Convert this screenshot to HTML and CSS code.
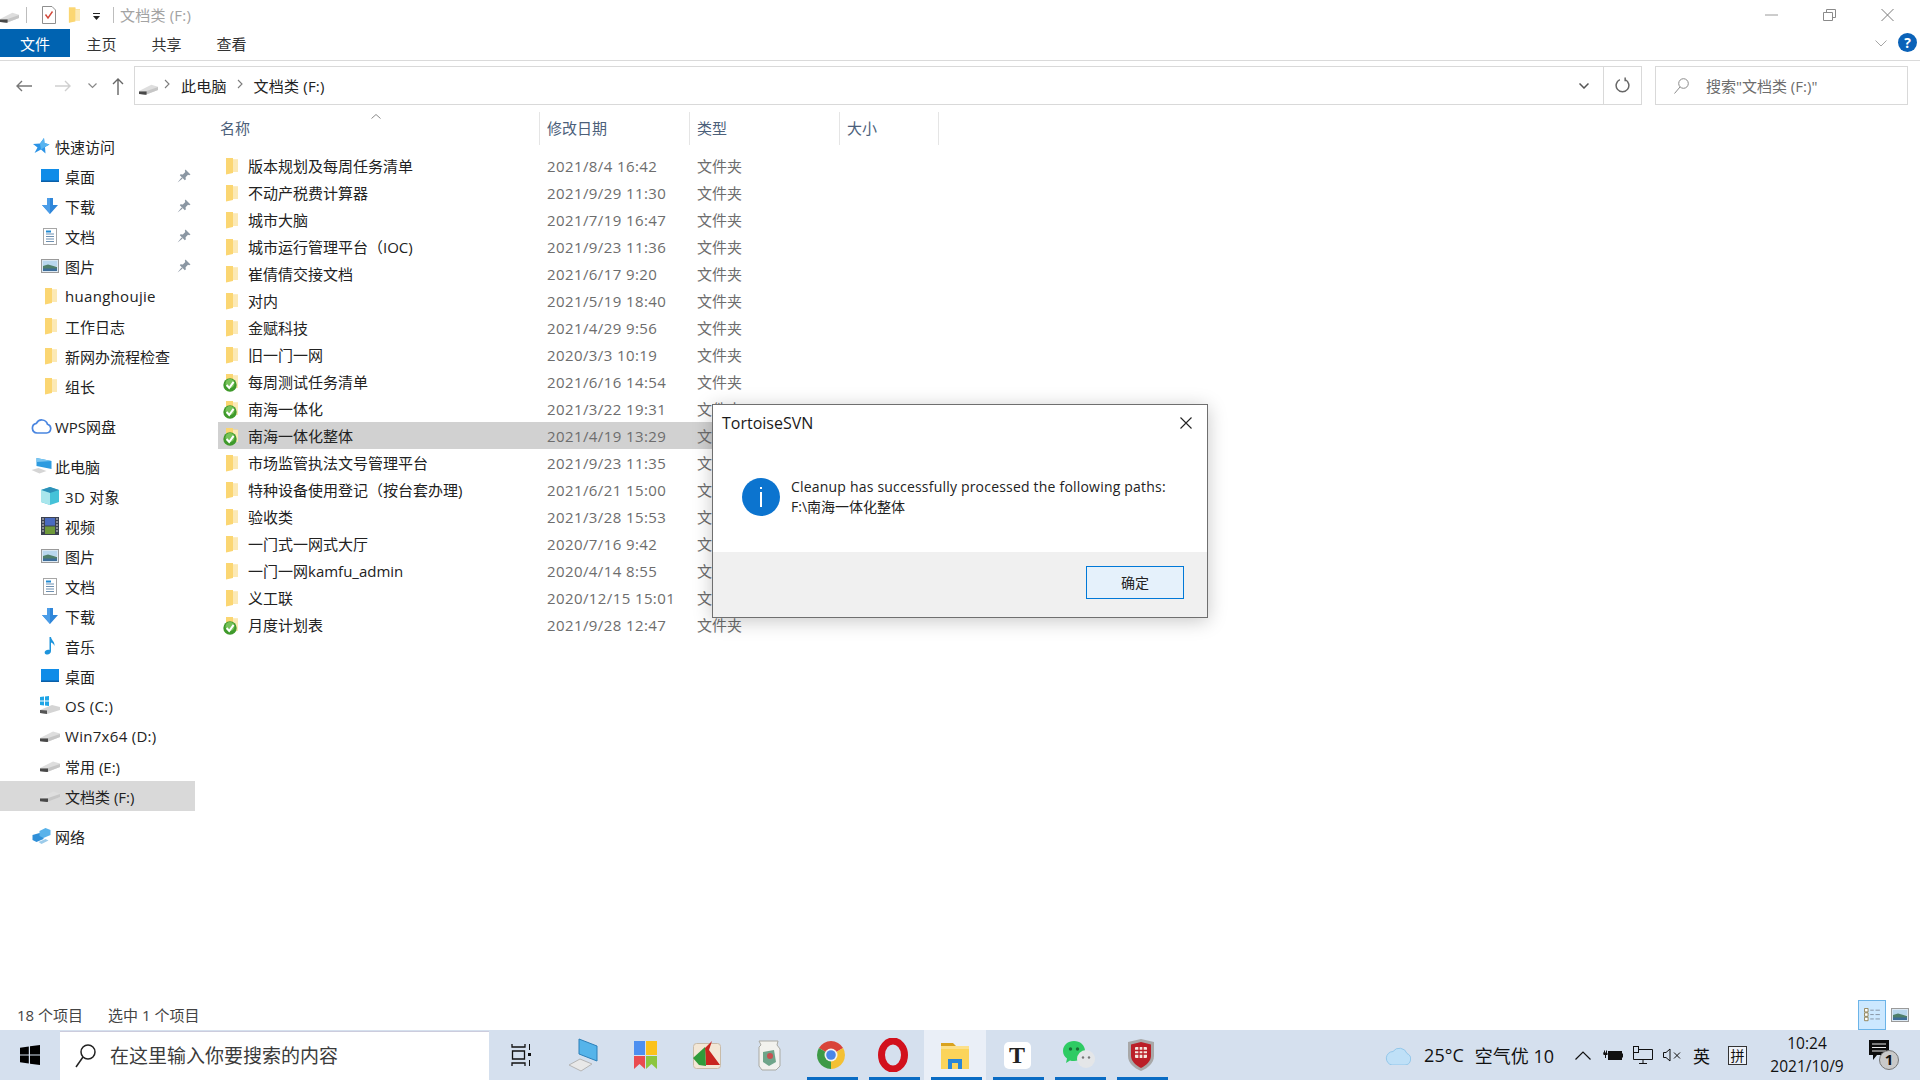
FILE: index.html
```html
<!DOCTYPE html>
<html lang="zh-CN">

<head>
  <meta charset="UTF-8" />
  <title>文档类 (F:)</title>
  <link rel="stylesheet" href="styles.css">
</head>

<body>
  <svg class="defs" width="0" height="0">
    <symbol id="drive" viewBox="0 0 20 14">
      <path d="M0 9 L13 2.500 L20 4.500 L20 8 L7 13 L0 12Z" fill="#dedede" />
      <path d="M0 9.500 L8 9 L20 5 L20 8 L7 13 L0 12Z" fill="#c6c6c6" />
      <path d="M0 9.500 L8 9.500 L8 12.700 L7 13 L0 12.300Z" fill="#484848" />
    </symbol>
    <symbol id="osdrive" viewBox="0 0 20 20">
      <path d="M0 14 L12 9 L20 11 L20 14 L7 18 L0 17Z" fill="#d4d4d4" />
      <path d="M0 14 L7 14.500 L7 18 L0 17Z" fill="#555" />
      <path d="M0 1 L4 .5 V4.500 H0Z M5 .4 L9 0 V4.500 H5Z M0 5.500 H4 V9.500 L0 9Z M5 5.500 H9 V10 L5 9.600Z" fill="#1fa5e6" />
    </symbol>
    <symbol id="folder" viewBox="0 0 13 18">
      <path d="M1 1 L8 1 L8 2.500 L13 2.500 L13 15 L8 15 L1 17Z" fill="#f9dc8a" />
      <path d="M1 1 L8 1 L8 16 L1 17.500Z" fill="#fbd672" />
      <path d="M8 3 L13 3 L13 15 L8 15Z" fill="#fce9b4" />
    </symbol>
    <symbol id="check" viewBox="0 0 14 14">
      <circle cx="7" cy="7" r="6.700" fill="#3f9a2c" />
      <circle cx="7" cy="5.500" r="4.500" fill="#76c25a" />
      <path d="M3.600 7 L6.200 10 L10.600 3.800" fill="none" stroke="#fff" stroke-width="2" />
    </symbol>
    <symbol id="pin" viewBox="0 0 14 14">
      <path d="M8.500 .5 L13.500 5.500 L12.200 6.300 L11 5.800 L8.600 8.200 L8.800 10.500 L7.800 11.300 L2.800 6.300 L3.600 5.300 L5.800 5.500 L8.300 3 L7.800 1.800Z M4.500 8.500 L5.600 9.600 L.6 13.500Z" fill="#8b97a3" />
    </symbol>
    <symbol id="star" viewBox="0 0 17 16">
      <path d="M11 0 L11.500 5 L16.500 6.500 L12 9 L12.500 15.500 L8 11.500 L1.500 15 L4.500 9.500 L0 6 L7 5.500Z" fill="#2b93e6" />
      <path d="M11 0 L11.500 5 L16.500 6.500 L12 9 L8 11.500 L7 5.500Z" fill="#58b4f0" />
    </symbol>
    <symbol id="desktop" viewBox="0 0 18 14">
      <rect width="18" height="13" fill="#0f8ce8" />
      <rect y="11.500" width="18" height="1.500" fill="#0a5fa8" />
    </symbol>
    <symbol id="download" viewBox="0 0 16 16">
      <path d="M5 0 H11 V7 H16 L8 16 L0 7 H5Z" fill="#2f86d9" />
      <path d="M5 0 H8 V16 L0 7 H5Z" fill="#4b9de8" />
    </symbol>
    <symbol id="doc" viewBox="0 0 14 17">
      <rect x=".5" y=".5" width="13" height="16" fill="#fff" stroke="#a6a6a6" />
      <path d="M3 3.500 H8 M3 6 H11 M3 8.500 H11 M3 11 H11 M3 13.500 H11" stroke="#6d8fb0" />
      <path d="M3 3.500 H8" stroke="#1f8ad2" stroke-width="2" />
    </symbol>
    <symbol id="picture" viewBox="0 0 18 14">
      <rect x=".5" y=".5" width="17" height="13" fill="#dbe8f3" stroke="#9a9a9a" />
      <rect x="2" y="2" width="14" height="5" fill="#b9d7ee" />
      <path d="M2 7 L7 5.500 L16 8 V12 H2Z" fill="#4f7f6a" />
      <rect x="2" y="9.500" width="14" height="2.500" fill="#3d6d9a" />
    </symbol>
    <symbol id="cloud" viewBox="0 0 21 16">
      <path d="M6 15 H15.500 A4.500 4.500 0 0 0 16.500 6.200 A6 6 0 0 0 5.400 5.300 A4.900 4.900 0 0 0 6 15Z" fill="none" stroke="#4a86e0" stroke-width="1.700" />
    </symbol>
    <symbol id="pc" viewBox="0 0 20 16">
      <path d="M5 0 L20 3 V11 L5 8Z" fill="#2d9be0" />
      <path d="M5 0 L20 3 L5 4Z" fill="#7cc6f1" />
      <path d="M0 12 L7 10 L15 13 L8 15.500Z" fill="#d5d5d5" />
    </symbol>
    <symbol id="cube" viewBox="0 0 18 18">
      <path d="M9 0 L18 3 V15 L9 18 L0 15 V3Z" fill="#45c2d8" />
      <path d="M9 0 L18 3 L9 6 L0 3Z" fill="#2e90b8" />
      <path d="M0 3 L9 6 V18 L0 15Z" fill="#a9e6ec" />
    </symbol>
    <symbol id="video" viewBox="0 0 18 18">
      <rect width="18" height="18" fill="#3c4250" />
      <rect x="4" y="1" width="10" height="7.500" fill="#4a6bc0" />
      <rect x="4" y="9.500" width="10" height="7.500" fill="#6f9a3a" />
      <path d="M1 2 H3 M1 5 H3 M1 8 H3 M1 11 H3 M1 14 H3 M15 2 H17 M15 5 H17 M15 8 H17 M15 11 H17 M15 14 H17" stroke="#d9d9d9" />
    </symbol>
    <symbol id="music" viewBox="0 0 12 18">
      <path d="M5.500 0 H7 C7.500 3.500 11 4.500 10.500 9 C9.800 7 8.500 6 7 5.500 V14 C7 16.500 4.700 18 2.500 17.500 C.5 17 0 15 1.500 13.700 C3 12.500 4.500 12.500 5.500 13Z" fill="#1e94dc" />
    </symbol>
    <symbol id="network" viewBox="0 0 18 16">
      <path d="M0 7 L7 5 L11 7 V11 L4 14 L0 12Z" fill="#2f8fd8" />
      <path d="M7 3 L13 0 L18 2 V7 L11 10 L7 8Z" fill="#59b2ea" />
      <path d="M6 14 L13 11 L16 12.500 L9 16Z" fill="#9ccbea" />
    </symbol>
    <symbol id="chev" viewBox="0 0 6 10">
      <path d="M1 1 L5 5 L1 9" fill="none" stroke="#7c7c7c" stroke-width="1.100" />
    </symbol>
  </svg>

  <div class="screen">
    <header class="titlebar">
      <svg class="qa-drive"><use href="#drive" /></svg>
      <span class="qa-sep"></span>
      <svg class="qa-check" viewBox="0 0 14 18">
        <path d="M.5 .5 H10 L13.500 4 V17.500 H.5Z" fill="#fff" stroke="#8f8f8f" />
        <path d="M3.500 8.500 L6 12 L10.500 5.500" fill="none" stroke="#d2483a" stroke-width="1.400" />
      </svg>
      <svg class="qa-folder"><use href="#folder" /></svg>
      <svg class="qa-drop" viewBox="0 0 7 7">
        <path d="M0 0 H7 V1 H0Z M0 3 H7 L3.500 7Z" fill="#222" />
      </svg>
      <span class="qa-sep qa-sep-2"></span>
      <span class="title-text">文档类 (F:)</span>
      <div class="win-controls">
        <svg viewBox="0 0 13 12"><path d="M0 6 H13" stroke="#9a9a9a" /></svg>
        <svg viewBox="0 0 13 12"><path d="M.5 3.500 H9.500 V11.500 H.5Z M3.500 3.500 V.5 H12.500 V8.500 H9.500" fill="none" stroke="#8a8a8a" /></svg>
        <svg viewBox="0 0 13 12"><path d="M.5 0 L12.500 12 M12.500 0 L.5 12" stroke="#7a7a7a" /></svg>
      </div>
    </header>

    <nav class="ribbon">
      <span class="tab tab-file">文件</span>
      <span class="tab">主页</span>
      <span class="tab">共享</span>
      <span class="tab">查看</span>
      <svg class="ribbon-chev" viewBox="0 0 12 7"><path d="M.5 .5 L6 6 L11.500 .5" fill="none" stroke="#a6a6a6" /></svg>
      <span class="help">?</span>
    </nav>

    <div class="addressbar">
      <div class="nav-buttons">
        <svg class="nb-back" viewBox="0 0 16 12"><path d="M6 1 L1 6 L6 11 M1 6 H16" fill="none" stroke="#777" stroke-width="1.400" /></svg>
        <svg class="nb-forward" viewBox="0 0 16 12"><path d="M10 1 L15 6 L10 11 M15 6 H0" fill="none" stroke="#cfcfcf" stroke-width="1.400" /></svg>
        <svg class="nb-recent" viewBox="0 0 9 6"><path d="M.5 .5 L4.500 4.500 L8.500 .5" fill="none" stroke="#888" stroke-width="1.200" /></svg>
        <svg class="nb-up" viewBox="0 0 12 17"><path d="M1 6 L6 1 L11 6 M6 1 V17" fill="none" stroke="#666" stroke-width="1.400" /></svg>
      </div>
      <div class="address">
        <svg class="addr-drive"><use href="#drive" /></svg>
        <svg class="addr-chev"><use href="#chev" /></svg>
        <span class="crumb">此电脑</span>
        <svg class="addr-chev"><use href="#chev" /></svg>
        <span class="crumb">文档类 (F:)</span>
        <svg class="addr-down" viewBox="0 0 10 6"><path d="M.5 .5 L5 5 L9.500 .5" fill="none" stroke="#555" stroke-width="1.500" /></svg>
        <span class="refresh">
          <svg viewBox="0 0 14 16"><path d="M4.500 2.500 A6 6 0 1 0 9.500 2.500 M9.500 .5 V4" fill="none" stroke="#666" stroke-width="1.400" /></svg>
        </span>
      </div>
      <div class="search">
        <svg viewBox="0 0 15 16"><circle cx="9.500" cy="5.500" r="4.800" fill="none" stroke="#8a8a8a" /><path d="M6 9 L.5 15.500" stroke="#8a8a8a" /></svg>
        <span>搜索"文档类 (F:)"</span>
      </div>
    </div>

    <div class="explorer">
      <aside class="navpane">
        <div class="nav-group">
          <div class="nav-row nav-head"><svg class="ic-star"><use href="#star" /></svg>快速访问</div>
          <div class="nav-row"><svg class="ic-wide"><use href="#desktop" /></svg>桌面<svg class="pin"><use href="#pin" /></svg></div>
          <div class="nav-row"><svg class="ic-dl"><use href="#download" /></svg>下载<svg class="pin"><use href="#pin" /></svg></div>
          <div class="nav-row"><svg class="ic-doc"><use href="#doc" /></svg>文档<svg class="pin"><use href="#pin" /></svg></div>
          <div class="nav-row"><svg class="ic-wide"><use href="#picture" /></svg>图片<svg class="pin"><use href="#pin" /></svg></div>
          <div class="nav-row latin"><svg class="ic-folder"><use href="#folder" /></svg>huanghoujie</div>
          <div class="nav-row"><svg class="ic-folder"><use href="#folder" /></svg>工作日志</div>
          <div class="nav-row"><svg class="ic-folder"><use href="#folder" /></svg>新网办流程检查</div>
          <div class="nav-row"><svg class="ic-folder"><use href="#folder" /></svg>组长</div>
        </div>
        <div class="nav-group">
          <div class="nav-row nav-head"><svg class="ic-cloud"><use href="#cloud" /></svg>WPS网盘</div>
        </div>
        <div class="nav-group">
          <div class="nav-row nav-head"><svg class="ic-cloud"><use href="#pc" /></svg>此电脑</div>
          <div class="nav-row latin"><svg class="ic-sq"><use href="#cube" /></svg>3D 对象</div>
          <div class="nav-row"><svg class="ic-sq"><use href="#video" /></svg>视频</div>
          <div class="nav-row"><svg class="ic-wide"><use href="#picture" /></svg>图片</div>
          <div class="nav-row"><svg class="ic-doc"><use href="#doc" /></svg>文档</div>
          <div class="nav-row"><svg class="ic-dl"><use href="#download" /></svg>下载</div>
          <div class="nav-row"><svg class="ic-music"><use href="#music" /></svg>音乐</div>
          <div class="nav-row"><svg class="ic-wide"><use href="#desktop" /></svg>桌面</div>
          <div class="nav-row latin"><svg class="ic-os"><use href="#osdrive" /></svg>OS (C:)</div>
          <div class="nav-row latin"><svg class="ic-drive"><use href="#drive" /></svg>Win7x64 (D:)</div>
          <div class="nav-row"><svg class="ic-drive"><use href="#drive" /></svg>常用 (E:)</div>
          <div class="nav-row selected"><svg class="ic-drive"><use href="#drive" /></svg>文档类 (F:)</div>
        </div>
        <div class="nav-group">
          <div class="nav-row nav-head"><svg class="ic-cloud"><use href="#network" /></svg>网络</div>
        </div>
      </aside>

      <main class="files">
        <div class="file-header">
          <span class="col-h col-name">名称
            <svg class="sort" viewBox="0 0 10 5"><path d="M.5 4.500 L5 .5 L9.500 4.500" fill="none" stroke="#8a8a8a" /></svg>
          </span>
          <span class="col-h">修改日期</span>
          <span class="col-h">类型</span>
          <span class="col-h">大小</span>
        </div>
        <div class="file-list">
          <div class="file-row"><span class="name"><svg class="f-ic"><use href="#folder" /></svg>版本规划及每周任务清单</span><span class="date">2021/8/4 16:42</span><span class="type">文件夹</span></div>
          <div class="file-row"><span class="name"><svg class="f-ic"><use href="#folder" /></svg>不动产税费计算器</span><span class="date">2021/9/29 11:30</span><span class="type">文件夹</span></div>
          <div class="file-row"><span class="name"><svg class="f-ic"><use href="#folder" /></svg>城市大脑</span><span class="date">2021/7/19 16:47</span><span class="type">文件夹</span></div>
          <div class="file-row"><span class="name"><svg class="f-ic"><use href="#folder" /></svg>城市运行管理平台（IOC)</span><span class="date">2021/9/23 11:36</span><span class="type">文件夹</span></div>
          <div class="file-row"><span class="name"><svg class="f-ic"><use href="#folder" /></svg>崔倩倩交接文档</span><span class="date">2021/6/17 9:20</span><span class="type">文件夹</span></div>
          <div class="file-row"><span class="name"><svg class="f-ic"><use href="#folder" /></svg>对内</span><span class="date">2021/5/19 18:40</span><span class="type">文件夹</span></div>
          <div class="file-row"><span class="name"><svg class="f-ic"><use href="#folder" /></svg>金赋科技</span><span class="date">2021/4/29 9:56</span><span class="type">文件夹</span></div>
          <div class="file-row"><span class="name"><svg class="f-ic"><use href="#folder" /></svg>旧一门一网</span><span class="date">2020/3/3 10:19</span><span class="type">文件夹</span></div>
          <div class="file-row"><span class="name"><svg class="f-ic"><use href="#folder" /></svg><svg class="ok"><use href="#check" /></svg>每周测试任务清单</span><span class="date">2021/6/16 14:54</span><span class="type">文件夹</span></div>
          <div class="file-row"><span class="name"><svg class="f-ic"><use href="#folder" /></svg><svg class="ok"><use href="#check" /></svg>南海一体化</span><span class="date">2021/3/22 19:31</span><span class="type">文件夹</span></div>
          <div class="file-row selected"><span class="name"><svg class="f-ic"><use href="#folder" /></svg><svg class="ok"><use href="#check" /></svg>南海一体化整体</span><span class="date">2021/4/19 13:29</span><span class="type">文件夹</span></div>
          <div class="file-row"><span class="name"><svg class="f-ic"><use href="#folder" /></svg>市场监管执法文号管理平台</span><span class="date">2021/9/23 11:35</span><span class="type">文件夹</span></div>
          <div class="file-row"><span class="name"><svg class="f-ic"><use href="#folder" /></svg>特种设备使用登记（按台套办理)</span><span class="date">2021/6/21 15:00</span><span class="type">文件夹</span></div>
          <div class="file-row"><span class="name"><svg class="f-ic"><use href="#folder" /></svg>验收类</span><span class="date">2021/3/28 15:53</span><span class="type">文件夹</span></div>
          <div class="file-row"><span class="name"><svg class="f-ic"><use href="#folder" /></svg>一门式一网式大厅</span><span class="date">2020/7/16 9:42</span><span class="type">文件夹</span></div>
          <div class="file-row"><span class="name"><svg class="f-ic"><use href="#folder" /></svg>一门一网kamfu_admin</span><span class="date">2020/4/14 8:55</span><span class="type">文件夹</span></div>
          <div class="file-row"><span class="name"><svg class="f-ic"><use href="#folder" /></svg>义工联</span><span class="date">2020/12/15 15:01</span><span class="type">文件夹</span></div>
          <div class="file-row"><span class="name"><svg class="f-ic"><use href="#folder" /></svg><svg class="ok"><use href="#check" /></svg>月度计划表</span><span class="date">2021/9/28 12:47</span><span class="type">文件夹</span></div>
        </div>
      </main>
    </div>

    <footer class="statusbar">
      <span class="count">18 个项目</span>
      <span class="picked">选中 1 个项目</span>
      <span class="view-btn active">
        <svg viewBox="0 0 18 16"><path d="M.5 .5 H4.500 V4.500 H.5Z M.5 5.500 H4.500 V9.500 H.5Z M.5 10.500 H4.500 V14.500 H.5Z" fill="#fff" stroke="#8a7a4a" /><path d="M7 2.500 H11 M13 2.500 H18 M7 7.500 H11 M13 7.500 H18 M7 12.500 H11 M13 12.500 H18" stroke="#7f8a99" /></svg>
      </span>
      <span class="view-btn">
        <svg viewBox="0 0 18 14"><use href="#picture" /></svg>
      </span>
    </footer>

    <div class="taskbar">
      <span class="start">
        <svg viewBox="0 0 20 20"><path d="M0 2.800 L8.800 1.500 V9.500 H0Z M10 1.300 L20 0 V9.500 H10Z M0 10.500 H8.800 V18.500 L0 17.200Z M10 10.500 H20 V20 L10 18.700Z" fill="#000" /></svg>
      </span>
      <div class="taskbar-search">
        <svg viewBox="0 0 21 24"><circle cx="13" cy="8" r="7" fill="none" stroke="#222" stroke-width="1.500" /><path d="M8 13 L1 23" stroke="#222" stroke-width="1.500" /></svg>
        <span>在这里输入你要搜索的内容</span>
      </div>
      <div class="task-buttons">
        <span class="task-btn">
          <svg class="tb-view" viewBox="0 0 20 24"><path d="M1 1 V4 H14 V1 M1 23 V20 H14 V23 M1.500 8 H13.500 V16 H1.500Z" fill="none" stroke="#111" stroke-width="1.300" /><path d="M18.500 1 V7 M18.500 17 V23" stroke="#111" /><rect x="17" y="10" width="3" height="3" fill="#111" /></svg>
        </span>
        <span class="task-btn">
          <svg class="tb-pc" viewBox="0 0 30 34"><path d="M11 1 L29 8 V23 L11 16Z" fill="#55b4ea" stroke="#2d7fb8" /><path d="M1 27 L12 21 L24 26 L13 33Z" fill="#e8e8e8" stroke="#b5b5b5" /></svg>
        </span>
        <span class="task-btn">
          <svg class="tb-mark" viewBox="0 0 23 28"><rect width="11" height="14" fill="#4d8ff0" /><rect x="12" width="11" height="14" fill="#fbc21b" /><path d="M0 15 H11 V28 L5.500 23 L0 28Z" fill="#ea4b50" /><path d="M12 15 H23 V28 L17.500 23 L12 28Z" fill="#8cc63f" /></svg>
        </span>
        <span class="task-btn">
          <svg class="tb-snip" viewBox="0 0 28 28"><rect x=".5" y="2.500" width="27" height="25" rx="3" fill="#f3e7d6" stroke="#c8bba8" /><path d="M12 7 L19 0 L16 9 L27 24 L13 24Z" fill="#c9251f" /><path d="M0 17 L12 6 L13 25 L6 24Z" fill="#2f9b3a" /></svg>
        </span>
        <span class="task-btn">
          <svg class="tb-jar" viewBox="0 0 24 32"><path d="M2 2 H21 L20 6 L23 10 V27 L19 31 H5 L2 27 V8 L4 6Z" fill="#f2f2ee" stroke="#a9a9a3" /><path d="M6 13 L17 11 L19 23 L12 27 L6 23Z" fill="#6fa58a" /><circle cx="13" cy="17" r="3" fill="#c85050" /></svg>
        </span>
        <span class="task-btn running">
          <svg class="tb-chrome" viewBox="0 0 28 28"><path d="M14 14 L1.900 7 A14 14 0 0 1 26.100 7Z" fill="#d9443a" /><path d="M14 14 L26.100 7 A14 14 0 0 1 14 28Z" fill="#f4c033" /><path d="M14 14 L14 28 A14 14 0 0 1 1.900 7Z" fill="#3d9a46" /><circle cx="14" cy="14" r="6.500" fill="#f3f3f3" /><circle cx="14" cy="14" r="4.800" fill="#4a85e8" /></svg>
        </span>
        <span class="task-btn running">
          <svg class="tb-opera" viewBox="0 0 30 34"><ellipse cx="15" cy="17" rx="11.500" ry="14" fill="none" stroke="#d2111d" stroke-width="7" /></svg>
        </span>
        <span class="task-btn running active">
          <svg class="tb-explorer" viewBox="0 0 28 28"><path d="M0 2 H12 L15 5 H0Z" fill="#d9a21e" /><rect y="5" width="28" height="23" fill="#fbd45a" /><path d="M0 5 H28 V8 H0Z" fill="#fce08a" /><path d="M7 28 V18 H21 V28 H17 V22 H11 V28Z" fill="#2a86d6" /></svg>
        </span>
        <span class="task-btn running">
          <span class="tb-typora">T</span>
        </span>
        <span class="task-btn running">
          <svg class="tb-wechat" viewBox="0 0 32 28"><path d="M11 0 C17 0 22 4 22 10 C22 16 17 20 11 20 C9.500 20 8 20 7 19.500 L3 22 L4 17.500 C1.500 15.500 0 13 0 10 C0 4 5 0 11 0Z" fill="#2ecb63" /><circle cx="7.500" cy="8" r="1.700" fill="#1a6d36" /><circle cx="14.500" cy="8" r="1.700" fill="#1a6d36" /><circle cx="23" cy="18" r="9" fill="#e4e6e8" /><circle cx="20" cy="16.500" r="1.200" fill="#777" /><circle cx="26" cy="16.500" r="1.200" fill="#777" /></svg>
        </span>
        <span class="task-btn running">
          <svg class="tb-shield" viewBox="0 0 26 32"><path d="M13 0 L26 3 V17 C26 24 20 29 13 32 C6 29 0 24 0 17 V3Z" fill="#a8a8a8" /><path d="M13 3 L23 5.500 V17 C23 22 18 26.500 13 29 C8 26.500 3 22 3 17 V5.500Z" fill="#bb1f27" /><rect x="7" y="8" width="12" height="11" rx="1" fill="#f5e9e0" /><path d="M7 11.500 H19 M7 15 H19 M11 8 V19 M15 8 V19" stroke="#bb1f27" stroke-width="1.300" /></svg>
        </span>
      </div>
      <div class="tray">
        <svg class="tr-cloud" viewBox="0 0 26 20"><path d="M7 20 H20 A6 6 0 0 0 22 8.500 A8 8 0 0 0 8 6.500 A6.800 6.800 0 0 0 7 20Z" fill="#bfe0f7" stroke="#93c7ea" /></svg>
        <span class="tr-temp">25°C</span>
        <span class="tr-air">空气优 10</span>
        <svg class="tr-caret" viewBox="0 0 16 9"><path d="M.5 8.500 L8 1 L15.500 8.500" fill="none" stroke="#111" stroke-width="1.200" /></svg>
        <svg class="tr-batt" viewBox="0 0 20 14"><path d="M0 5 H4 M1.500 2.500 V5 M3.500 2.500 V5 M2.500 7 V10" stroke="#111" /><path d="M.5 5 H4.500 V7 H.5Z" fill="#111" /><rect x="5.500" y="3.500" width="13" height="8" fill="#111" stroke="#111" /><rect x="19" y="5.500" width="1" height="4" fill="#111" /></svg>
        <svg class="tr-net" viewBox="0 0 20 18"><path d="M5.500 3.500 H19.500 V13.500 H.5 V6 M10 13.500 V17 M6 17.500 H14" fill="none" stroke="#111" /><rect x=".5" y=".5" width="5" height="6" fill="#d5e0ee" stroke="#111" /></svg>
        <svg class="tr-sound" viewBox="0 0 19 14"><path d="M.5 4.500 H3 L7 1 V13 L3 9.500 H.5Z" fill="none" stroke="#111" /><path d="M11 4.500 L17 10.500 M17 4.500 L11 10.500" stroke="#111" /></svg>
        <span class="tr-lang">英</span>
        <span class="tr-ime">拼</span>
        <span class="clock"><span>10:24</span><span>2021/10/9</span></span>
        <span class="notify">
          <svg viewBox="0 0 20 20"><path d="M0 0 H20 V15 H8 L4 20 V15 H0Z" fill="#0c0c0c" /><path d="M3 4 H17 M3 7.500 H17 M3 11 H17" stroke="#e8e8e8" /></svg>
          <span class="notify-count">1</span>
        </span>
      </div>
    </div>

    <section class="dialog">
      <div class="dialog-title">
        <span>TortoiseSVN</span>
        <svg viewBox="0 0 12 12"><path d="M.5 .5 L11.500 11.500 M11.500 .5 L.5 11.500" stroke="#222" stroke-width="1.100" /></svg>
      </div>
      <div class="dialog-body">
        <span class="info-icon"><span></span><span></span></span>
        <p class="dialog-msg">
          <span class="msg-line msg-en">Cleanup has successfully processed the following paths:</span>
          <span class="msg-line">F:\南海一体化整体</span>
        </p>
      </div>
      <div class="dialog-footer">
        <button class="ok-btn">确定</button>
      </div>
    </section>
  </div>
</body>

</html>
```

FILE: styles.css
```css
* {
  box-sizing: border-box;
}

body {
  margin: 0;
  font-family: "Open Sans", "Noto Sans CJK SC", sans-serif;
  font-size: 15px;
  color: #1a1a1a;
  background-color: #fff;
}

svg {
  display: block;
  flex: none;
}

.defs {
  position: absolute;
}

.screen {
  position: relative;
  width: 1920px;
  height: 1080px;
  overflow: hidden;
  display: flex;
  flex-direction: column;
}

/* title bar */
.titlebar {
  height: 29px;
  display: flex;
  align-items: center;
}

.qa-drive {
  width: 19px;
  height: 14px;
  margin-top: 5px;
}

.qa-sep {
  width: 1px;
  height: 16px;
  margin-left: 7px;
  background-color: #bdbdbd;
}

.qa-check {
  width: 14px;
  height: 18px;
  margin-left: 15px;
}

.qa-folder {
  width: 12px;
  height: 18px;
  margin-left: 12px;
}

.qa-drop {
  width: 7px;
  height: 7px;
  margin-left: 13px;
  margin-top: 3px;
}

.qa-sep-2 {
  margin-left: 13px;
}

.title-text {
  margin-left: 6px;
  margin-top: -1px;
  color: #a3a3a3;
  letter-spacing: 0.2px;
}

.win-controls {
  margin-left: auto;
  margin-right: 26px;
  display: flex;
  gap: 45px;
}

.win-controls svg {
  width: 13px;
  height: 12px;
}

/* ribbon */
.ribbon {
  height: 32px;
  display: flex;
  align-items: flex-start;
  border-bottom: 1px solid #dadada;
}

.tab {
  width: 65px;
  height: 28px;
  line-height: 30px;
  text-align: center;
  color: #333;
}

.tab-file {
  width: 70px;
  margin-right: -1px;
  color: #fff;
  background-color: #0063b1;
}

.ribbon-chev {
  width: 12px;
  height: 7px;
  margin-left: auto;
  margin-top: 11px;
}

.help {
  width: 19px;
  height: 19px;
  margin: 4px 3px 0 11px;
  border-radius: 50%;
  background-color: #0a62b8;
  color: #fff;
  font-size: 14px;
  font-weight: 700;
  line-height: 19px;
  text-align: center;
}

/* address row */
.addressbar {
  height: 51px;
  padding: 5px 12px 7px 0;
  display: flex;
  align-items: stretch;
}

.nav-buttons {
  width: 134px;
  display: flex;
  align-items: center;
}

.nb-back,
.nb-forward {
  width: 16px;
  height: 12px;
}

.nb-back {
  margin-left: 16px;
}

.nb-forward {
  margin-left: 23px;
}

.nb-recent {
  width: 9px;
  height: 6px;
  margin-left: 17px;
}

.nb-up {
  width: 12px;
  height: 17px;
  margin-left: 15px;
  margin-top: 1px;
}

.address {
  width: 1508px;
  display: flex;
  align-items: center;
  border: 1px solid #d9d9d9;
}

.addr-drive {
  width: 19px;
  height: 14px;
  margin-left: 4px;
  margin-right: -4px;
  margin-top: 6px;
}

.addr-chev {
  width: 6px;
  height: 10px;
  margin: -3px 11px 0 10px;
}

.crumb {
  margin-top: -1px;
  color: #222;
  letter-spacing: 0.2px;
}

.addr-down {
  width: 10px;
  height: 6px;
  margin-left: auto;
  margin-right: 14px;
}

.refresh {
  width: 38px;
  height: 100%;
  display: flex;
  align-items: center;
  justify-content: center;
  border-left: 1px solid #d9d9d9;
}

.refresh svg {
  width: 15px;
  height: 17px;
}

.search {
  width: 253px;
  margin-left: 13px;
  padding-left: 18px;
  display: flex;
  align-items: center;
  gap: 17px;
  border: 1px solid #d9d9d9;
  color: #6d6d6d;
}

.search span {
  margin-top: -1px;
}

.search svg {
  width: 15px;
  height: 16px;
}

/* explorer body */
.explorer {
  flex: 1;
  display: flex;
  min-height: 0;
}

.navpane {
  width: 195px;
  padding-top: 19px;
}

.nav-group + .nav-group {
  margin-top: 10px;
}

.nav-row {
  height: 30px;
  padding-left: 38px;
  display: flex;
  align-items: center;
  white-space: nowrap;
  color: #222;
}

.nav-row.latin {
  letter-spacing: 0.3px;
}

.nav-row.selected {
  background-color: #d9d9d9;
}

.nav-row > svg:first-child {
  margin-left: calc((24px - var(--w)) / 2);
  margin-right: calc((24px - var(--w)) / 2 + 3px);
  width: var(--w);
}

.nav-head {
  padding-left: 29px;
}

.nav-head > svg:first-child {
  margin-right: calc((24px - var(--w)) / 2 + 2px);
}

.ic-star { --w: 17px; height: 16px; }
.ic-cloud { --w: 21px; height: 16px; }
.ic-wide { --w: 18px; height: 14px; }
.ic-dl { --w: 16px; height: 16px; }
.ic-doc { --w: 14px; height: 17px; }
.ic-folder { --w: 13px; height: 18px; }
.ic-sq { --w: 18px; height: 18px; }
.ic-music { --w: 12px; height: 18px; }
.ic-os { --w: 20px; height: 20px; }
.ic-drive { --w: 20px; height: 14px; }

.pin {
  width: 14px;
  height: 14px;
  margin-left: auto;
  margin-right: 4px;
}

.files {
  width: 721px;
  margin-left: 23px;
}

.file-header {
  height: 31px;
  display: grid;
  grid-template-columns: 322px 150px 150px 99px;
}

.col-h {
  position: relative;
  padding-left: 7px;
  line-height: 33px;
  color: #4c607a;
  border-right: 1px solid #e5e5e5;
}

.col-name {
  padding-left: 2px;
}

.sort {
  position: absolute;
  left: 153px;
  top: 2px;
  width: 10px;
  height: 5px;
}

.file-list {
  margin-top: 9px;
}

.file-row {
  height: 27px;
  display: grid;
  grid-template-columns: 322px 150px 150px;
  align-items: center;
  white-space: nowrap;
}

.file-row.selected {
  background-color: #d1d1d1;
}

.name {
  position: relative;
  padding-left: 7px;
  display: flex;
  align-items: center;
  gap: 10px;
  color: #222;
}

.f-ic {
  width: 13px;
  height: 18px;
}

.ok {
  position: absolute;
  left: 5px;
  top: 7px;
  width: 14px;
  height: 14px;
}

.date,
.type {
  padding-left: 7px;
  color: #6d6d6d;
}

.date {
  letter-spacing: 0.4px;
}

/* status bar */
.statusbar {
  height: 30px;
  padding: 0 11px 0 17px;
  display: flex;
  align-items: center;
  color: #444;
}

.count,
.picked {
  margin-top: -2px;
}

.picked {
  margin-left: 25px;
}

.view-btn {
  width: 18px;
  height: 30px;
  margin-left: 5px;
  display: flex;
  align-items: center;
  justify-content: center;
}

.view-btn svg {
  width: 18px;
  height: 14px;
}

.view-btn.active {
  width: 28px;
  margin-left: auto;
  background-color: #cce8ff;
  border: 1px solid #6cb4e8;
}

/* taskbar */
.taskbar {
  height: 50px;
  display: flex;
  background-color: #d5e0ee;
}

.start {
  width: 60px;
  display: flex;
  align-items: center;
  justify-content: center;
}

.start svg {
  width: 20px;
  height: 20px;
}

.taskbar-search {
  width: 429px;
  margin-top: 1px;
  padding-left: 15px;
  display: flex;
  align-items: center;
  gap: 14px;
  background-color: #fff;
  font-size: 19px;
  color: #3b3b3b;
  border-top: 1px solid #ccd;
}

.taskbar-search span {
  margin-top: -2px;
}

.taskbar-search svg {
  width: 21px;
  height: 24px;
}

.task-buttons {
  margin-left: 1px;
  display: flex;
}

.task-btn {
  position: relative;
  width: 62px;
  display: flex;
  align-items: center;
  justify-content: center;
}

.task-btn.running::after {
  content: "";
  position: absolute;
  left: 7px;
  bottom: 0;
  width: 51px;
  height: 3px;
  background-color: #0a6cc4;
}

.task-btn.active {
  background-color: #eaeff7;
}

.tb-view { width: 20px; height: 24px; }
.tb-pc { width: 30px; height: 34px; }
.tb-mark { width: 23px; height: 28px; }
.tb-snip { width: 28px; height: 28px; }
.tb-jar { width: 24px; height: 32px; }
.tb-chrome { width: 28px; height: 28px; }
.tb-opera { width: 30px; height: 34px; }
.tb-explorer { width: 28px; height: 28px; }
.tb-wechat { width: 32px; height: 28px; }
.tb-shield { width: 26px; height: 32px; }

.tb-typora {
  width: 27px;
  height: 27px;
  border-radius: 5px;
  background-color: #fff;
  font-family: "Liberation Serif", serif;
  font-size: 24px;
  font-weight: 700;
  line-height: 27px;
  text-align: center;
  color: #222;
}

.tray {
  margin-left: auto;
  padding-right: 21px;
  display: flex;
  align-items: center;
  color: #111;
}

.tr-cloud { width: 26px; height: 20px; }
.tr-temp { margin-left: 13px; font-size: 18px; }
.tr-air { margin-left: 11px; font-size: 18px; }
.tr-caret { width: 16px; height: 9px; margin-left: 21px; }
.tr-batt { width: 20px; height: 14px; margin-left: 12px; }
.tr-net { width: 20px; height: 18px; margin-left: 10px; }
.tr-sound { width: 19px; height: 14px; margin-left: 10px; }
.tr-lang { width: 18px; margin-left: 11px; font-size: 17px; }

.tr-ime {
  width: 19px;
  height: 19px;
  margin-left: 17px;
  border: 1px solid #333;
  background-color: #eef2f8;
  font-size: 14px;
  line-height: 17px;
  text-align: center;
}

.clock {
  width: 82px;
  margin-left: 19px;
  display: flex;
  flex-direction: column;
  align-items: center;
  font-size: 15.500px;
  line-height: 23px;
}

.notify {
  position: relative;
  width: 30px;
  height: 30px;
  margin-left: 21px;
}

.notify svg {
  width: 20px;
  height: 20px;
}

.notify-count {
  position: absolute;
  left: 10px;
  top: 10px;
  width: 20px;
  height: 20px;
  border-radius: 50%;
  border: 1.500px solid #777;
  background-color: #c9c9c9;
  font-size: 15px;
  font-weight: 700;
  line-height: 17px;
  text-align: center;
}

/* dialog */
.dialog {
  position: absolute;
  left: 712px;
  top: 404px;
  width: 496px;
  height: 214px;
  display: flex;
  flex-direction: column;
  background-color: #fff;
  border: 1px solid #6f6f6f;
  box-shadow: 0 3px 18px rgba(0, 0, 0, 0.22);
}

.dialog-title {
  height: 36px;
  padding: 0 15px 0 9px;
  display: flex;
  align-items: center;
  justify-content: space-between;
  font-size: 16px;
  color: #1a1a1a;
}

.dialog-title svg {
  width: 12px;
  height: 12px;
}

.dialog-body {
  flex: 1;
  padding-left: 29px;
  display: flex;
  align-items: center;
  gap: 11px;
}

.info-icon {
  width: 38px;
  height: 38px;
  border-radius: 50%;
  background-color: #0c74cf;
  display: flex;
  flex-direction: column;
  align-items: center;
  gap: 3px;
  padding-top: 9px;
  flex: none;
}

.info-icon span {
  width: 1.500px;
  background-color: #fff;
}

.info-icon span:first-child {
  height: 2px;
}

.info-icon span:last-child {
  height: 15px;
}

.dialog-msg {
  margin: 1px 0 0;
  font-size: 14px;
  color: #222;
}

.msg-line {
  display: block;
  line-height: 20px;
}

.msg-en {
  letter-spacing: 0.2px;
}

.dialog-footer {
  height: 65px;
  padding: 14px 23px 0 0;
  display: flex;
  justify-content: flex-end;
  align-items: flex-start;
  background-color: #f0f0f0;
}

.ok-btn {
  width: 98px;
  height: 33px;
  padding: 0 0 2px;
  font-family: inherit;
  font-size: 14px;
  color: #222;
  background-color: #e5f1fb;
  border: 1px solid #0078d7;
}
```
